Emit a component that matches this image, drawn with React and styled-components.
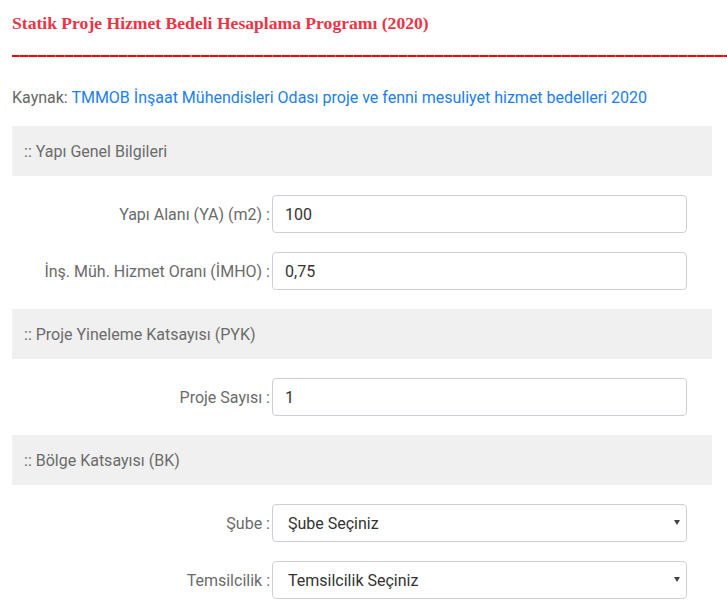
import React from "react";
import styled, { createGlobalStyle } from "styled-components";

const GlobalStyle = createGlobalStyle`
  body {
    margin: 0;
    background: #fff;
    font-family: Roboto, "Liberation Sans", sans-serif;
    overflow-x: hidden;
  }
`;

const sections = [
  {
    title: ":: Yapı Genel Bilgileri",
    fields: [
      { label: "Yapı Alanı (YA) (m2) :", value: "100" },
      { label: "İnş. Müh. Hizmet Oranı (İMHO) :", value: "0,75" },
    ],
  },
  {
    title: ":: Proje Yineleme Katsayısı (PYK)",
    fields: [{ label: "Proje Sayısı :", value: "1" }],
  },
  {
    title: ":: Bölge Katsayısı (BK)",
    fields: [
      { label: "Şube :", options: ["Şube Seçiniz"] },
      { label: "Temsilcilik :", options: ["Temsilcilik Seçiniz"] },
    ],
  },
];

const App = () => {
  return (
    <Page>
      <GlobalStyle />
      <Title>Statik Proje Hizmet Bedeli Hesaplama Programı (2020)</Title>
      <Rule />

      <Source>
        Kaynak: <a href="#">TMMOB İnşaat Mühendisleri Odası proje ve fenni mesuliyet hizmet bedelleri 2020</a>
      </Source>

      {sections.map((s) => (
        <Section key={s.title}>
          <SectionHead>{s.title}</SectionHead>
          {s.fields.map((f) => (
            <Row key={f.label}>
              <Label>{f.label}</Label>
              {f.options ? (
                <SelectWrap>
                  <Select defaultValue={f.options[0]}>
                    {f.options.map((o) => (
                      <option key={o}>{o}</option>
                    ))}
                  </Select>
                </SelectWrap>
              ) : (
                <Input defaultValue={f.value} />
              )}
            </Row>
          ))}
        </Section>
      ))}
    </Page>
  );
};

export default App;

const Page = styled.div`
  width: 700px;
  padding: 0 12px;
`;

const Title = styled.h1`
  margin: 0;
  padding-top: 13px;
  font-family: "Liberation Serif", "DejaVu Serif", serif;
  font-weight: bold;
  font-size: 17.6px;
  line-height: 20px;
  color: #ee3344;
`;

// the original draws a row of red underscores here
const Rule = styled.div`
  width: 715px;
  height: 0;
  margin-top: 22px;
  border-bottom: 2px solid #ff0000;
  border-image: repeating-linear-gradient(90deg, #ff0000 0 8px, #ff6060 8px 9px) 1;
`;

const Source = styled.p`
  margin: 31px 0 0;
  font-size: 16px;
  line-height: 20px;
  color: #666;

  a {
    color: #1a7ef5;
    text-decoration: none;
  }
`;

const Section = styled.div`
  margin-top: 18px;
  & + & {
    margin-top: 0;
  }
`;

const SectionHead = styled.div`
  height: 50px;
  display: flex;
  align-items: center;
  padding: 0 12px;
  margin-bottom: 19px;
  background: #f0f0f0;
  color: #6b6b6b;
  font-size: 16px;
`;

const Row = styled.div`
  display: flex;
  align-items: center;
  height: 38px;
  margin-bottom: 19px;
`;

const Label = styled.label`
  width: 258px;
  padding-right: 2px;
  text-align: right;
  font-size: 16px;
  color: #6b6b6b;
`;

const fieldStyle = `
  box-sizing: border-box;
  width: 415px;
  height: 38px;
  padding: 0 12px;
  border: 1px solid #cdd0d6;
  border-radius: 4px;
  background: #fff;
  font-family: Roboto, "Liberation Sans", sans-serif;
  font-size: 16px;
  color: #333;
  outline: none;
`;

const Input = styled.input`
  ${fieldStyle}
`;

const SelectWrap = styled.div`
  position: relative;

  &::after {
    content: "";
    position: absolute;
    right: 7px;
    top: 16px;
    border-left: 3px solid transparent;
    border-right: 3px solid transparent;
    border-top: 5px solid #444;
    pointer-events: none;
  }
`;

const Select = styled.select`
  ${fieldStyle}
  appearance: none;
  padding-left: 15px;
`;
